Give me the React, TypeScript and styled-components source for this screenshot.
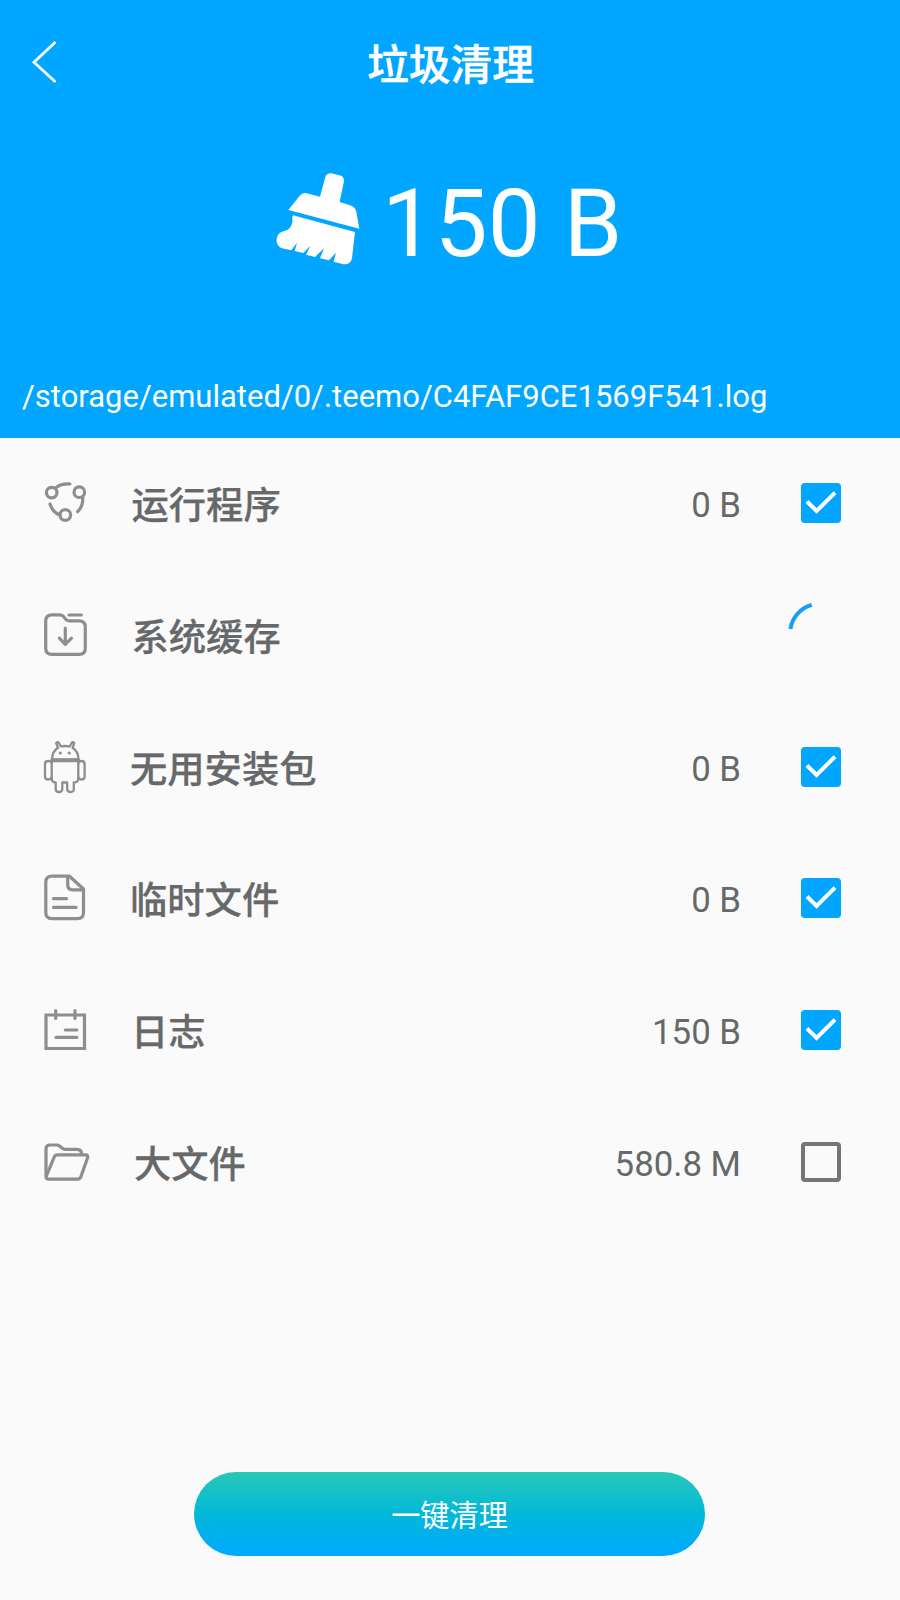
import React from "react";
import styled, { createGlobalStyle } from "styled-components";

const GlobalStyle = createGlobalStyle`
  body { margin: 0; background: #fafafa; }
  * { box-sizing: border-box; }
`;

const Screen = styled.div`
  width: 900px;
  height: 1600px;
  display: flex;
  flex-direction: column;
  background: #fafafa;
  color: #666869;
  font-family: Roboto, "Noto Sans CJK SC", sans-serif;
`;

const Header = styled.header`
  height: 437.5px;
  display: flex;
  flex-direction: column;
  background: #00a6ff;
  color: #fff;
`;

const TitleBar = styled.div`
  height: 124px;
  display: grid;
  grid-template-columns: 100px 1fr 100px;
  align-items: center;
`;

const BackButton = styled.button`
  height: 60px;
  padding: 0 0 0 28px;
  border: 0;
  background: none;
  display: flex;
  align-items: center;
`;

const Title = styled.h1`
  margin: 0;
  padding: 0 0 1px 1px;
  text-align: center;
  font-family: "Noto Sans CJK SC", sans-serif;
  font-size: 41.7px;
  line-height: 60px;
  font-weight: 500;
  -webkit-text-stroke: 0.5px;
`;

const Summary = styled.div`
  height: 196px;
  padding: 0 0 6px 275px;
  display: flex;
  align-items: center;
  gap: 22px;
`;

const Total = styled.div`
  padding-top: 9px;
  font-size: 94px;
  line-height: 110px;
  white-space: pre;
`;

const ScanPath = styled.div`
  margin-top: 57px;
  padding-left: 22px;
  font-size: 31px;
  line-height: 40px;
  white-space: nowrap;
`;

const List = styled.ul`
  margin: 0;
  padding: 0;
  list-style: none;
`;

const Row = styled.li`
  height: 131.7px;
  padding: 0 59px 0 36px;
  display: grid;
  grid-template-columns: 60px 1fr auto 100px;
  align-items: center;
`;

const Label = styled.span<{ $indent: number }>`
  padding-left: ${(p) => p.$indent}px;
  font-family: "Noto Sans CJK SC", sans-serif;
  font-size: 37.3px;
  line-height: 54px;
  font-weight: 500;
  -webkit-text-stroke: 0.25px;
`;

const Size = styled.span`
  font-size: 34.8px;
  line-height: 40px;
  padding-top: 4px;
`;

const Control = styled.span`
  display: flex;
  justify-content: flex-end;
`;

const Box = styled.span<{ $checked: boolean }>`
  width: 40px;
  height: 40px;
  border-radius: 4px;
  border: ${(p) => (p.$checked ? "0" : "4px solid #757575")};
  background: ${(p) => (p.$checked ? "#00a6ff" : "transparent")};
`;

const Spinner = styled.svg`
  margin-right: -11px;
`;

const Footer = styled.footer`
  margin-top: auto;
  padding: 0 1px 44px 0;
  display: flex;
  justify-content: center;
`;

const CleanButton = styled.button`
  width: 511px;
  height: 84px;
  padding: 0 0 2px;
  border: 0;
  border-radius: 42px;
  background: linear-gradient(#28c8b6, #02b8d9 50%, #00a9ff);
  color: #fff;
  font-family: "Noto Sans CJK SC", sans-serif;
  font-size: 29.2px;
`;

const LineIcon = styled.svg`
  width: 60px;
  height: 60px;
  fill: none;
  stroke: #8e8e8e;
  stroke-width: 3.2;
  stroke-linecap: round;
  stroke-linejoin: round;
`;

const Processes = () => (
  <LineIcon viewBox="0 0 60 60">
    <circle cx="15.7" cy="19.6" r="5.3" />
    <circle cx="43.3" cy="19.2" r="5.3" />
    <circle cx="29.3" cy="42" r="5.3" />
    <path d="M20.5 14.3Q25.5 10.4 34 11M46.7 24Q47.4 33 41.6 38.7M14 31Q16.5 39.5 24 42" />
  </LineIcon>
);

const CacheFolder = () => (
  <LineIcon viewBox="0 0 60 60">
    <path d="M9.7 16q0-6.2 6.3-6.2h7.5q2.5 0 4 1.8l2.2 2.7q1.3 1.5 3.5 1.5h9.8q6.3 0 6.3 6.2v21.2q0 6.2-6.3 6.2h-27q-6.3 0-6.3-6.2zM33 10h12.4M29.3 23v16.2M23.4 33.2l5.9 6.3 6.2-6.3" />
  </LineIcon>
);

const Robot = () => (
  <LineIcon viewBox="0 0 60 60">
    <g strokeWidth="2.3">
      <path d="M16 22.5c0-6 2.5-9.5 6-11.7L20.2 6q1.7-1.5 2.7 0l2 3.5q4.5-1 8.7 0l2-3.5q1.2-1.5 2.7 0L36.5 10.8c3.5 2.2 6 5.7 6 11.7z" />
      <path d="M16 23.4h26.5" strokeWidth="3.6" />
      <path d="M15.7 24v17.5q0 4 4 4V52q0 3 3.3 3t3.3-3v-6.5h4.9V52q0 3 3.3 3t3.3-3v-6.5q4.5 0 4.5-4V24" />
      <path d="M15.7 26q-1-2-3.500-2-3.200 0-3.200 3v12.500q0 3 3.200 3 2.500 0 3.500-2M42.500 26q1-2 3-2 3.100 0 3.100 3v12.500q0 3-3.100 3-2 0-3-2" />
    </g>
    <circle cx="24.3" cy="16" r="1.6" fill="#8e8e8e" stroke="none" />
    <circle cx="33.2" cy="16" r="1.6" fill="#8e8e8e" stroke="none" />
  </LineIcon>
);

const Document = () => (
  <LineIcon viewBox="0 0 60 60">
    <path d="M16 8.2h17.5L47.5 21v23.5q0 6.2-6.2 6.2H16q-6.2 0-6.2-6.2V14.2Q9.8 8.2 16 8.2zM31.7 8.5v8.3q0 5 5 5h10.5M17.5 30.7h13M17.5 39.4h22.5" />
  </LineIcon>
);

const Calendar = () => (
  <LineIcon viewBox="0 0 60 60">
    <path strokeLinejoin="miter" d="M10 15h38.5v33.5H10z" />
    <path d="M19.7 10.5v8M39 10.5v8M29.3 30h11.5M20 37.4h20.8" />
  </LineIcon>
);

const OpenFolder = () => (
  <LineIcon viewBox="0 0 60 60">
    <path d="M10 44V17q0-4 4-4h6.5q1.8 0 3 1l2.8 2.3q1.2 1 3 1h12q4 0 4.5 5" />
    <path d="M21.5 22.9h28q3 0 2 3l-6.5 18.6q-.9 2.7-3.5 2.7H13q-3.8 0-2.5-3.5l7.7-18.5q1-2.3 3.3-2.3z" />
  </LineIcon>
);

const Broom = () => (
  <svg width="85" height="93.3" viewBox="45 35 255 280" fill="#fff">
    <path d="M197 47Q202 37 214 39L238 45Q253 49 252 62L239 125L268 134Q286 139 289 154L298 205L85 149L119 106Q127 96 140 99L180 109Z" />
    <path d="M99 165L285 215L276 294Q272 314 250 312L221 304L228 277L207 300L180 294L192 264L165 290L138 283L151 256L130 278L104 272L111 247L94 270L66 264Q47 256 50 235Q53 216 73 212Q94 207 98 181Q95 173 99 165Z" />
  </svg>
);

const CheckMark = () => (
  <svg width="40" height="40" viewBox="0 0 40 40" fill="none" stroke="#fff" strokeWidth="4">
    <path d="M6 18.5L15.6 28L34 9.6" />
  </svg>
);

type Item = {
  label: string;
  indent: number;
  icon: React.FC;
  size?: string;
  state: "checked" | "unchecked" | "scanning";
};

const items: Item[] = [
  { label: "运行程序", indent: 35.5, icon: Processes, size: "0 B", state: "checked" },
  { label: "系统缓存", indent: 35.5, icon: CacheFolder, state: "scanning" },
  { label: "无用安装包", indent: 34, icon: Robot, size: "0 B", state: "checked" },
  { label: "临时文件", indent: 34, icon: Document, size: "0 B", state: "checked" },
  { label: "日志", indent: 35, icon: Calendar, size: "150 B", state: "checked" },
  { label: "大文件", indent: 38, icon: OpenFolder, size: "580.8 M", state: "unchecked" },
];

export default function App() {
  return (
    <Screen>
      <GlobalStyle />
      <Header>
        <TitleBar>
          <BackButton aria-label="返回">
            <svg width="32" height="46" viewBox="0 0 32 46" fill="none" stroke="#fff" strokeWidth="2.8">
              <path d="M27.5 3L6 23.3L27.5 43" />
            </svg>
          </BackButton>
          <Title>垃圾清理</Title>
        </TitleBar>
        <Summary>
          <Broom />
          <Total>150 B</Total>
        </Summary>
        <ScanPath>/storage/emulated/0/.teemo/C4FAF9CE1569F541.log</ScanPath>
      </Header>
      <List>
        {items.map(({ label, indent, icon: Icon, size, state }) => (
          <Row key={label}>
            <Icon />
            <Label $indent={indent}>{label}</Label>
            <Size>{size}</Size>
            <Control>
              {state === "scanning" ? (
                <Spinner width="64" height="64" viewBox="0 0 64 64" fill="none" stroke="#149ff5" strokeWidth="4">
                  <path d="M2.4 26A29.6 29.6 0 0 1 23.8 1.9" />
                </Spinner>
              ) : (
                <Box $checked={state === "checked"}>{state === "checked" && <CheckMark />}</Box>
              )}
            </Control>
          </Row>
        ))}
      </List>
      <Footer>
        <CleanButton>一键清理</CleanButton>
      </Footer>
    </Screen>
  );
}
